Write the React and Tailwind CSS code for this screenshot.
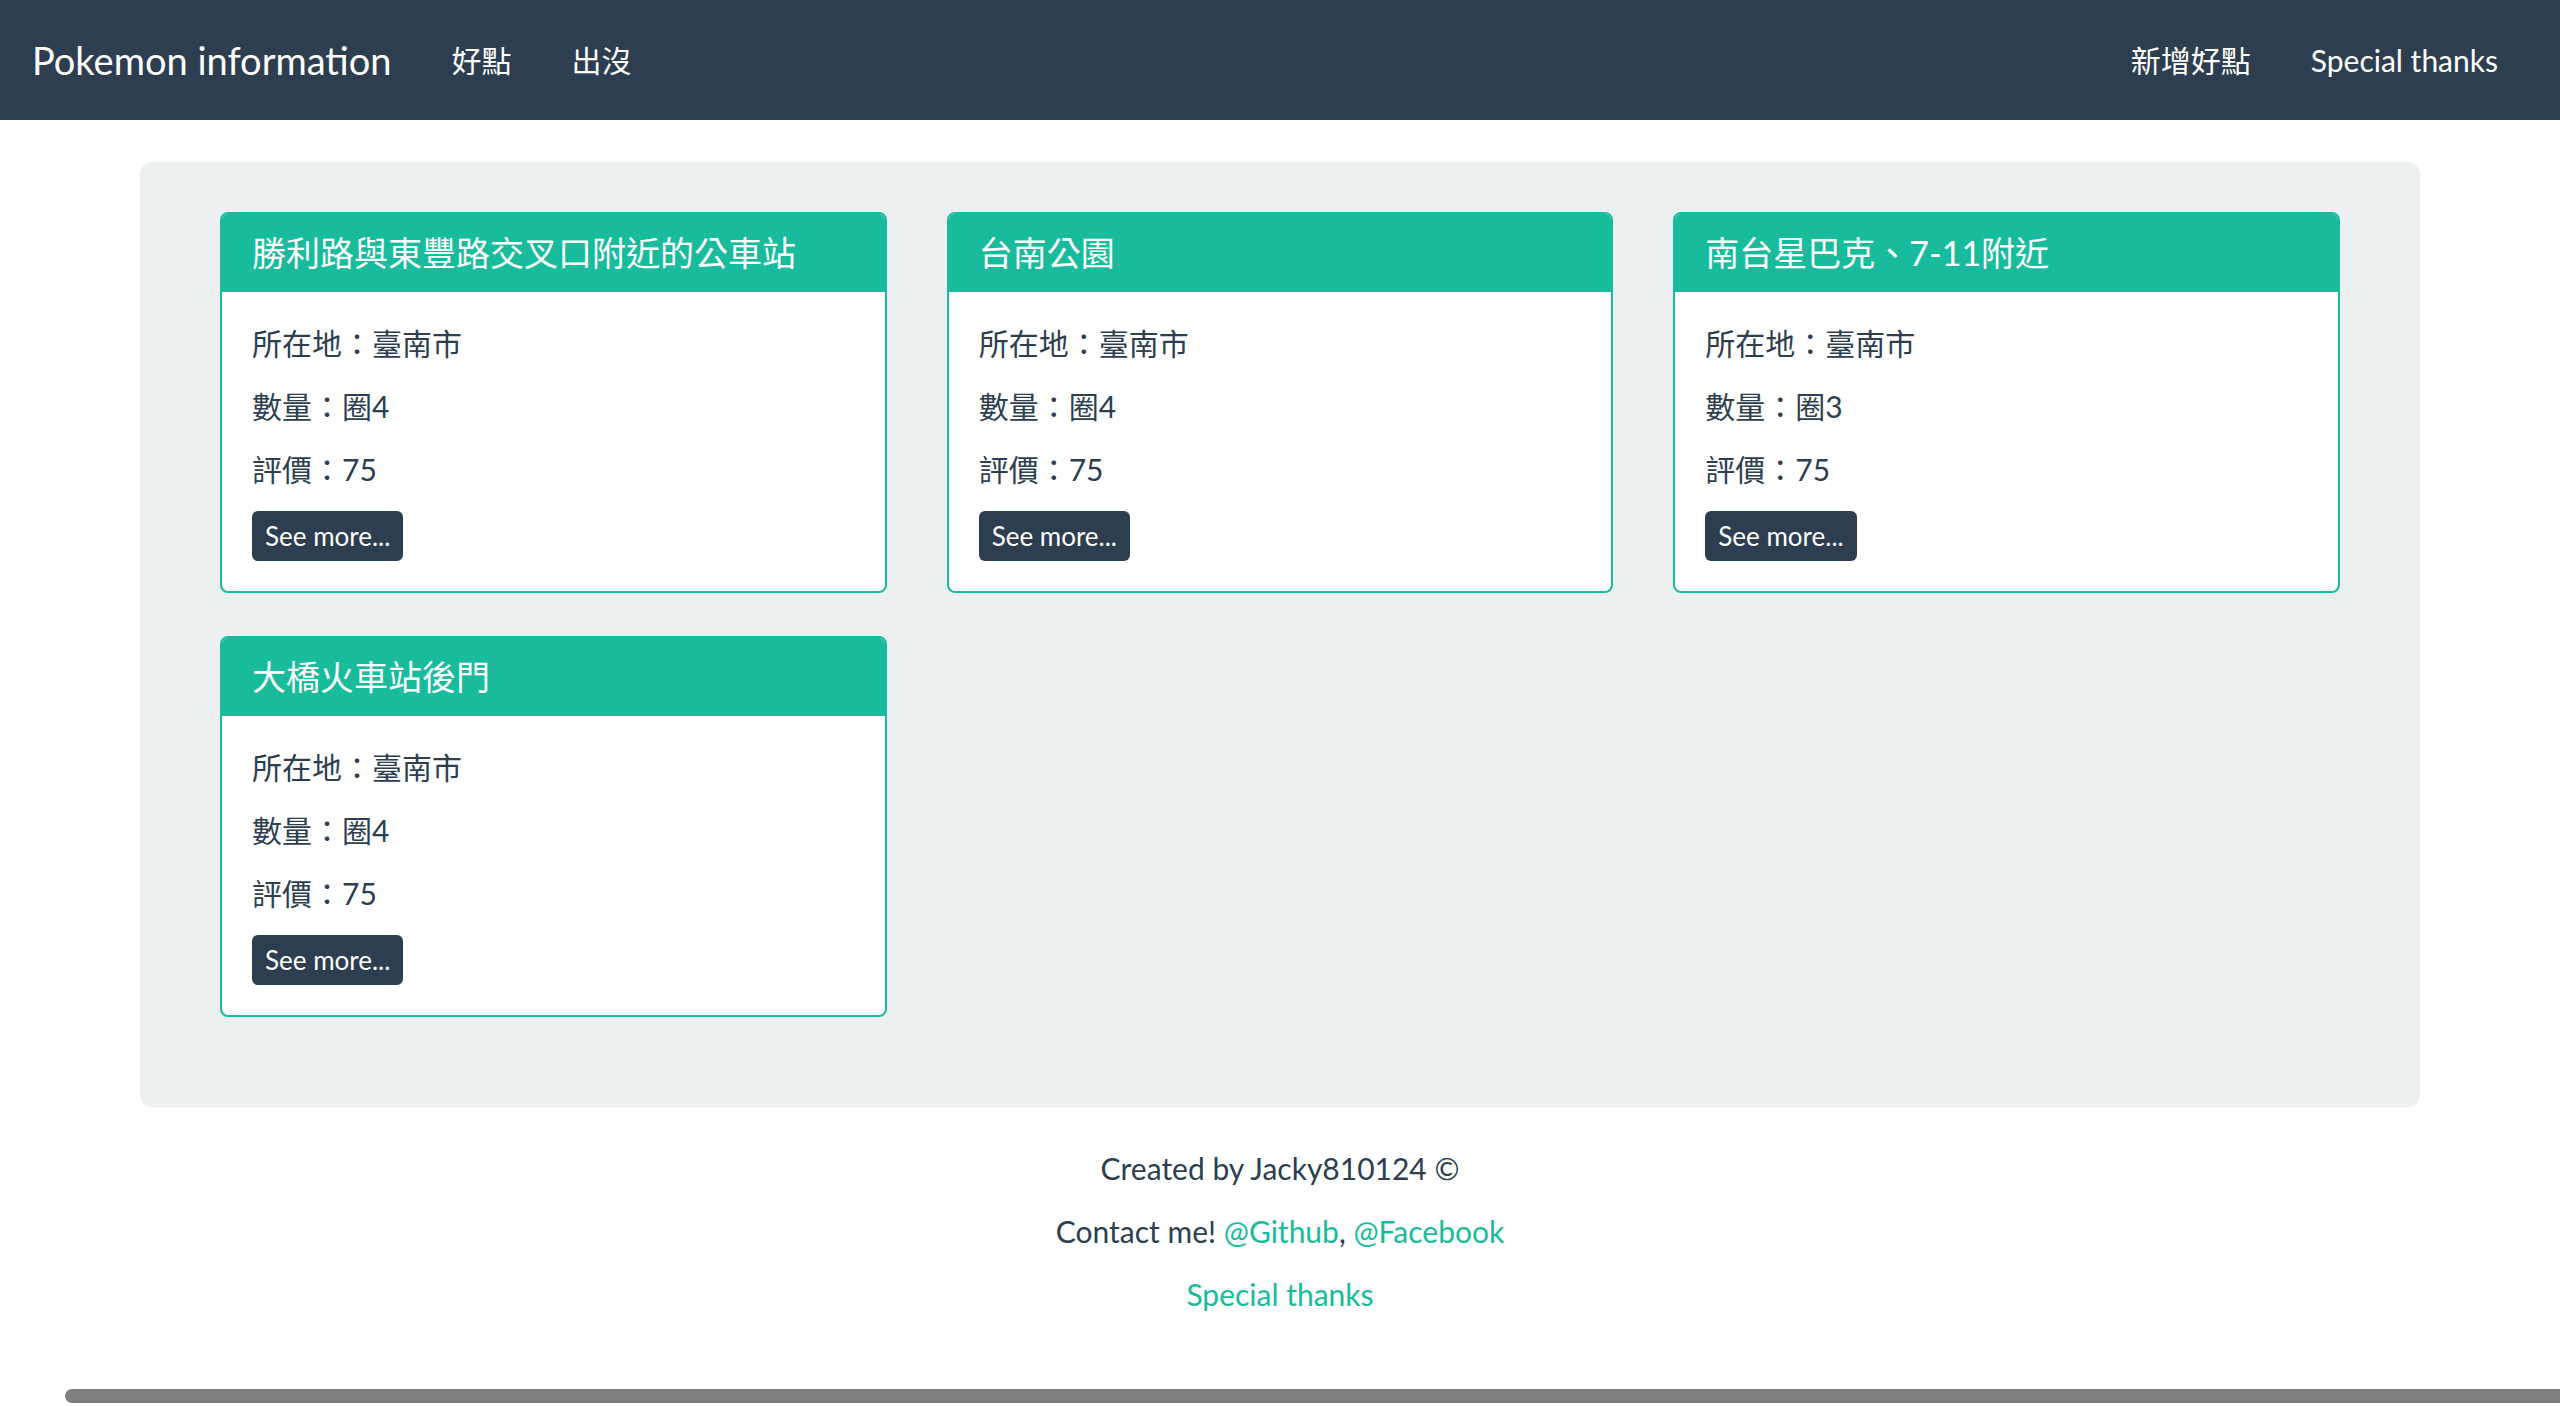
export default function App() {
  const spots = [
    { title: "勝利路與東豐路交叉口附近的公車站", city: "臺南市", count: "圈4", score: 75 },
    { title: "台南公園", city: "臺南市", count: "圈4", score: 75 },
    { title: "南台星巴克、7-11附近", city: "臺南市", count: "圈3", score: 75 },
    { title: "大橋火車站後門", city: "臺南市", count: "圈4", score: 75 },
  ];

  const font = { fontFamily: 'Lato, "Noto Sans CJK TC", sans-serif' };

  return (
    <div className="min-h-screen bg-white text-[#2c3e50]" style={font}>
      {/* navbar */}
      <nav className="h-[120px] bg-[#2c3e50] text-white flex items-center justify-between px-[32px]">
        <div className="flex items-center">
          <a className="text-[38px] pr-[30px]">Pokemon information</a>
          <a className="text-[30px] px-[30px]">好點</a>
          <a className="text-[30px] px-[30px]">出沒</a>
        </div>
        <div className="flex items-center">
          <a className="text-[30px] px-[30px]">新增好點</a>
          <a className="text-[30px] px-[30px]">Special thanks</a>
        </div>
      </nav>

      {/* spots */}
      <div className="w-[2280px] mx-auto mt-[42px] rounded-[12px] bg-[#ecf0f1] pt-[50px] pb-[90px] px-[80px]">
        <div className="grid grid-cols-3 gap-x-[60px] gap-y-[43px] items-start">
          {spots.map((s) => (
            <div key={s.title} className="bg-white border-2 border-[#18bc9c] rounded-[8px] overflow-hidden">
              <div className="h-[78px] bg-[#18bc9c] text-white text-[34px] flex items-center px-[30px] pb-[2px]">
                {s.title}
              </div>
              <div className="p-[30px] text-[30px] leading-[43px]">
                <p className="mb-[20px]">所在地：{s.city}</p>
                <p className="mb-[20px]">數量：{s.count}</p>
                <p className="mb-[20px]">評價：{s.score}</p>
                <button className="h-[50px] px-[13px] rounded-[6px] bg-[#2c3e50] text-white text-[26px] leading-[50px]">
                  See more...
                </button>
              </div>
            </div>
          ))}
        </div>
      </div>

      {/* footer */}
      <footer className="mt-[40px] text-center text-[30px] leading-[43px]">
        <p className="mb-[20px]">Created by Jacky810124 ©</p>
        <p className="mb-[20px]">
          Contact me! <a className="text-[#18bc9c]">@Github</a>, <a className="text-[#18bc9c]">@Facebook</a>
        </p>
        <p className="mb-[20px]">
          <a className="text-[#18bc9c]">Special thanks</a>
        </p>
      </footer>

      {/* macOS overlay scrollbar */}
      <div className="fixed left-[65px] right-0 bottom-[3px] h-[14px] rounded-l-full bg-[#7f7f7f]" />
    </div>
  );
}
